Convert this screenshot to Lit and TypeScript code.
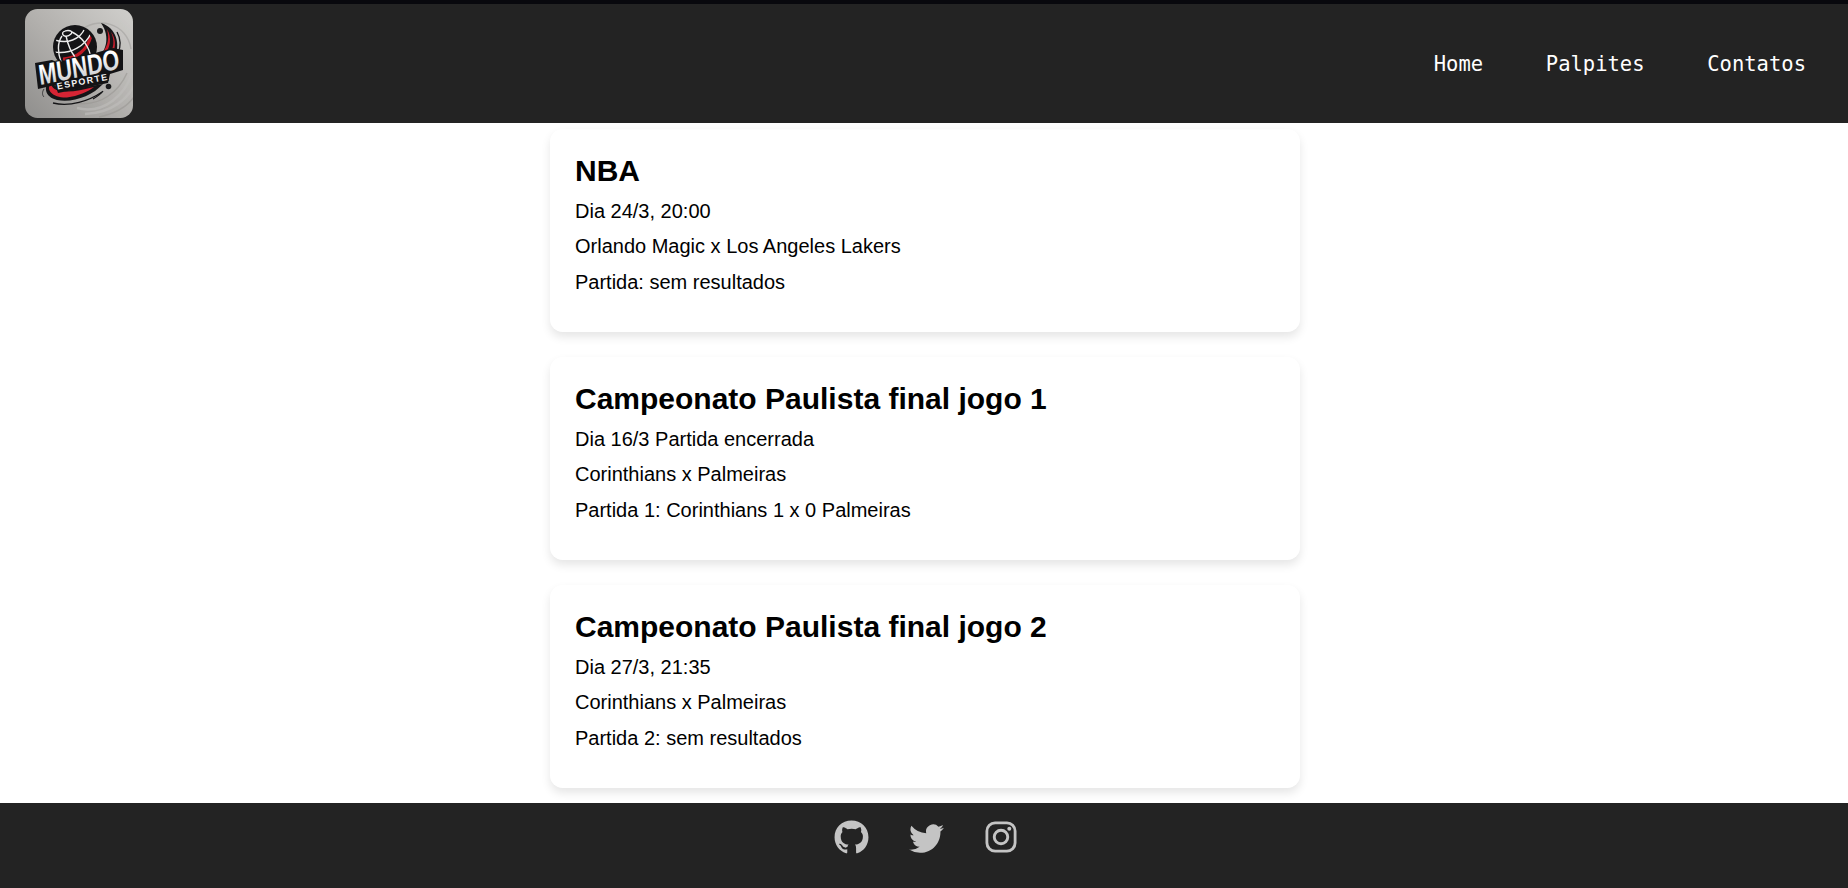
import { LitElement, html, svg, css } from "lit";
import { customElement, property } from "lit/decorators.js";

interface Match { title: string; lines: string[] }

const MATCHES: Match[] = [
  { title: "NBA", lines: ["Dia 24/3, 20:00", "Orlando Magic x Los Angeles Lakers", "Partida: sem resultados"] },
  { title: "Campeonato Paulista final jogo 1", lines: ["Dia 16/3 Partida encerrada", "Corinthians x Palmeiras", "Partida 1: Corinthians 1 x 0 Palmeiras"] },
  { title: "Campeonato Paulista final jogo 2", lines: ["Dia 27/3, 21:35", "Corinthians x Palmeiras", "Partida 2: sem resultados"] },
];

const LINKS = ["Home", "Palpites", "Contatos"];

@customElement("site-logo")
export class SiteLogo extends LitElement {
  static styles = css`
    :host { display: block; width: 108px; height: 109px; }
    svg { display: block; overflow: visible; }
    .name { font: bold 28.5px "Liberation Sans", Arial, sans-serif; }
    .sub { font: bold 9px "Liberation Sans", Arial, sans-serif; }
  `;
  render() {
    return html`<svg width="108" height="109" viewBox="0 0 108 109" role="img" aria-label="Mundo Esporte">
      <defs>
        <linearGradient id="bg" x1="1" y1="0" x2="0" y2="1"><stop offset="0" stop-color="#d0cfcc"/><stop offset=".5" stop-color="#b2b0ad"/><stop offset="1" stop-color="#8f8e8c"/></linearGradient>
        <linearGradient id="steel" x1="0" y1="0" x2="0" y2="1"><stop offset="0.3" stop-color="#fff"/><stop offset="1" stop-color="#c2c4c7"/></linearGradient>
        <clipPath id="tile"><rect width="108" height="109" rx="12.500"/></clipPath>
        <clipPath id="ball"><circle cx="49.500" cy="38" r="19.500"/></clipPath>
      </defs>
      <rect width="108" height="109" rx="12.500" fill="url(#bg)"/>
      <g clip-path="url(#tile)" fill="none" stroke="#c0bfbc" stroke-width="2.500" opacity=".6">
        <path d="M54 23C72 6 102 14 106 40" stroke="#a3a29f" stroke-width="1.500"/>
        <path d="M52 99C80 106 101 84 107 64"/><path d="M60 105C88 104 104 88 109 76"/>
        <path d="M74 108C94 104 104 95 109 88" stroke="#999793" stroke-width="1.500"/><path d="M51 94C76 98 94 82 102 64" stroke="#999793" stroke-width="1.500"/>
      </g>
      <circle cx="50" cy="38" r="22" fill="#141416"/>
      <g clip-path="url(#ball)" fill="none" stroke="#ececec" stroke-width="1.400">
        <path d="M38 50C53 49 62 41 66 27" stroke="#c01824" stroke-width="3"/>
        <path d="M30 31C42 35 55 31 60 19"/><path d="M29 43C46 46 61 36 66 24"/><path d="M38 23C43 20 49 22 46 25C42 29 36 27 38 23Z"/>
        <path d="M41 27C43 36 46 43 50 48"/><path d="M47 23C57 28 65 38 66 50"/><path d="M37 27C32 34 33 44 36 53"/>
      </g>
      <path d="M76 14C92 19 96 36 89 50L70 51C81 44 86 28 76 14Z" fill="#161618"/>
      <path d="M82 20C85 32 82 40 73 48L78 48C86 39 87 28 82 20Z" fill="#c91f2d"/>
      <path d="M86 23C90 32 89 40 83 47L87 46C92 37 90 28 86 23Z" fill="#c91f2d"/>
      <path d="M92 23C96 30 96 38 93 43" fill="none" stroke="#18181a" stroke-width="1.300"/>
      <circle cx="75" cy="22" r="3" fill="#1b1b1d"/>
      <path d="M25 71C18 78 20 88 32 91C48 94 67 87 78 75L60 78L36 83Z" fill="#141416"/>
      <path d="M26 74C20 81 28 89 42 88.500C53 87 63 83 69 78C58 81 48 83 40 82.500C31 82 26 79 26 74Z" fill="#d62434"/>
      <path d="M28 94C45 98 64 92 77 83" fill="none" stroke="#141416" stroke-width="1.300"/>
      <path d="M68 90C73 87 76 85 78 82" fill="none" stroke="#141416" stroke-width="1.300"/>
      <path d="M19 80C17 83 17 86 19 88" fill="none" stroke="#3b3b3c" stroke-width="1"/>
      <circle cx="83.500" cy="77.500" r="2.800" fill="#1b1b1d"/>
      <path d="M10 54L27 51L34 54L88 39L98 41L98 61L85 65L83 74L33 84L30 76L13 80Z" fill="#131315"/>
      <g transform="translate(15 76) rotate(-11.500) skewX(-4)">
        <text class="name" x="0" y="0" textLength="82" lengthAdjust="spacingAndGlyphs" fill="url(#steel)" stroke="#131315" stroke-width="2.500" paint-order="stroke">MUNDO</text>
      </g>
      <g transform="translate(32.500 80.500) rotate(-11)">
        <text class="sub" x="0" y="0" textLength="51" fill="#f2f2f2" stroke="#131315" stroke-width="2.500" paint-order="stroke">ESPORTE</text>
      </g>
    </svg>`;
  }
}

@customElement("match-card")
export class MatchCard extends LitElement {
  @property({ attribute: false }) match!: Match;
  static styles = css`
    :host { display: block; box-sizing: border-box; width: 750px; height: 203px; padding: 25px;
      border-radius: 12.5px; background: #fff; box-shadow: 0 5px 10px rgba(0, 0, 0, 0.1); }
    h2 { margin: 0 0 6.9px; font-size: 30px; line-height: 33px; }
    p { margin: 0; font-size: 20px; line-height: 35.6px; }
  `;
  render() {
    return html`<h2>${this.match.title}</h2>${this.match.lines.map((l) => html`<p>${l}</p>`)}`;
  }
}

const ICONS = [
  { name: "GitHub", w: 35, box: "0 0 496 512", art: svg`<path d="M165.900 397.400c0 2-2.300 3.600-5.200 3.600-3.300.3-5.600-1.300-5.600-3.600 0-2 2.300-3.600 5.200-3.600 3-.3 5.600 1.300 5.600 3.600z"/><path d="M248 8C106 8 0 112 0 252c0 108 67 200 168 236 13 3 18-6 18-13v-46c-70 15-85-30-85-30-11-29-28-37-28-37-23-16 2-15 2-15 25 2 39 26 39 26 22 39 59 28 74 21 2-16 9-28 17-34-56-6-115-28-115-124 0-27 8-42 26-61-3-7-11-34 3-67 21-7 69 27 69 27a238 238 0 0 1 126 0s48-34 69-27c14 34 6 60 3 67 18 19 29 34 29 61 0 96-61 118-118 124 10 8 18 24 18 48v67c0 7 5 16 18 13C433 452 496 360 496 252 496 112 390 8 248 8z"/>` },
  { name: "Twitter", w: 35, box: "0 0 16 16", art: svg`<path d="M5.026 15c6.038 0 9.341-5.003 9.341-9.334 0-.14 0-.282-.006-.422A6.685 6.685 0 0 0 16 3.542a6.658 6.658 0 0 1-1.889.518 3.301 3.301 0 0 0 1.447-1.817 6.533 6.533 0 0 1-2.087.793A3.286 3.286 0 0 0 7.875 6.030a9.325 9.325 0 0 1-6.767-3.429 3.289 3.289 0 0 0 1.018 4.382A3.323 3.323 0 0 1 .64 6.575v.045a3.288 3.288 0 0 0 2.632 3.218 3.203 3.203 0 0 1-.865.115 3.230 3.230 0 0 1-.614-.057 3.283 3.283 0 0 0 3.067 2.277A6.588 6.588 0 0 1 .78 13.580a6.320 6.320 0 0 1-.78-.045A9.344 9.344 0 0 0 5.026 15Z"/>` },
  { name: "Instagram", w: 32, box: "0 0 32 32", art: svg`<path fill-rule="evenodd" d="M10 .5h12a9.500 9.500 0 0 1 9.500 9.500v12a9.500 9.500 0 0 1-9.500 9.500H10A9.500 9.500 0 0 1 .5 22V10A9.500 9.500 0 0 1 10 .5ZM10.500 3.300A7 7 0 0 0 3.300 10.500v11a7 7 0 0 0 7.200 7.200h11a7 7 0 0 0 7.200-7.200v-11a7 7 0 0 0-7.200-7.200Z"/><path fill-rule="evenodd" d="M16 7.800a8.200 8.200 0 1 1 0 16.400a8.200 8.200 0 0 1 0-16.400Zm0 2.900a5.300 5.300 0 1 0 0 10.600a5.300 5.300 0 0 0 0-10.600Z"/><circle cx="24.300" cy="7.700" r="2"/>` },
];

@customElement("app-root")
export class AppRoot extends LitElement {
  static styles = css`
    :host { display: flex; flex-direction: column; height: 888px; background: #fff; color: #000;
      font-family: "Liberation Sans", Arial, sans-serif; }
    header { box-sizing: border-box; flex: none; height: 123px; border-top: 4px solid #08080d; background: #232323;
      display: flex; justify-content: space-between; align-items: flex-start; padding: 5px 42px 0 25px; }
    nav { display: flex; gap: 62.7px; padding-top: 42px; }
    a { color: #fff; text-decoration: none; }
    nav a { font: 20.5px/26px "DejaVu Sans Mono", monospace; }
    main { flex: none; height: 680px; box-sizing: border-box; padding: 6px 0 0 2px; overflow: hidden;
      display: flex; flex-direction: column; align-items: center; gap: 25px; }
    footer { flex: 1; background: #232323; display: flex; justify-content: center; align-items: flex-start;
      gap: 40.5px; padding: 16.5px 0 0 2px; box-sizing: border-box; }
    .icon { display: grid; place-items: center; height: 35px; }
    .icon svg { display: block; fill: #c4c4c4; }
  `;
  render() {
    return html`
      <header>
        <site-logo></site-logo>
        <nav>${LINKS.map((l) => html`<a href="#">${l}</a>`)}</nav>
      </header>
      <main>${MATCHES.map((m) => html`<match-card .match=${m}></match-card>`)}</main>
      <footer>${ICONS.map((i) => html`<a class="icon" href="#" aria-label=${i.name}><svg width=${i.w} height=${i.w} viewBox=${i.box}>${i.art}</svg></a>`)}</footer>
    `;
  }
}
